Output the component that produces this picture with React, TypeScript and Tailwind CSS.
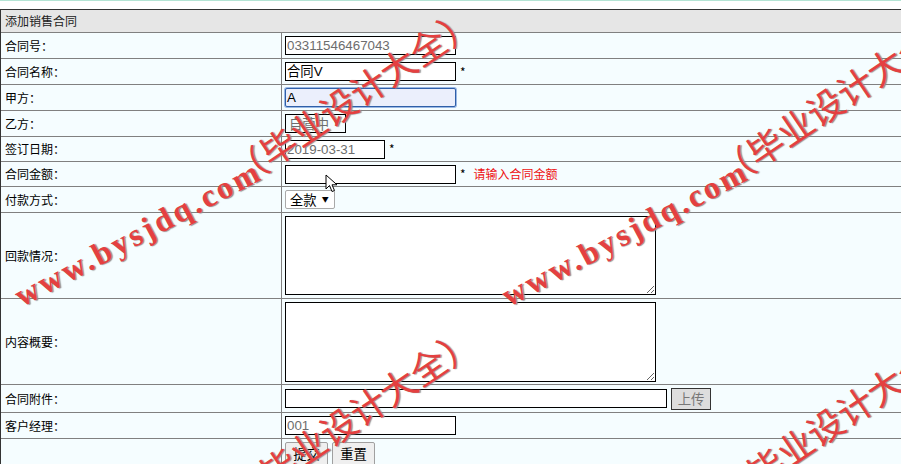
import React from "react";

const markBase =
  "absolute whitespace-nowrap -translate-x-1/2 -translate-y-1/2 leading-none text-[#e44040] [text-shadow:1px_1px_1px_#8a8a8a]";

function Latin({ cls }: { cls: string }) {
  return (
    <div className={markBase + " rotate-[-28deg] text-[32px] font-bold tracking-[3px] font-['Liberation_Serif',serif] " + cls}>
      www.bysjdq.com
    </div>
  );
}

function Cjk({ cls }: { cls: string }) {
  return (
    <div className={markBase + " rotate-[-34deg] text-[36px] font-['Noto_Sans_CJK_SC',sans-serif] " + cls}>
      （毕业设计大全）
    </div>
  );
}

function Row({ h, label, children }: { h: string; label: string; children?: React.ReactNode }) {
  return (
    <div className={"flex border-b border-[#808080] " + h}>
      <div className="w-[281px] shrink-0 border-r border-[#808080] flex items-center pl-[4px] text-[12px] text-black">
        {label}
      </div>
      <div className="flex items-center pl-[3px] gap-[4px]">{children}</div>
    </div>
  );
}

const inputBase =
  "h-[19px] border border-black bg-white px-[1px] text-[13.33px] leading-[17px] font-['Liberation_Sans','Noto_Sans_CJK_SC',sans-serif] outline-none";

export default function App() {
  return (
    <div className="relative w-[901px] h-[464px] overflow-hidden bg-white font-['Noto_Sans_CJK_SC','Liberation_Sans',sans-serif]">
      <div className="h-[9px] border-t border-[#b4e4d4]" />
      <div className="w-[910px] border-t border-l border-[#333333] bg-[#f5fdff]">
        <div className="h-[23px] border-b border-[#808080] bg-[#e6e6e6] flex items-center pl-[4px] text-[12px] text-[#222]">
          添加销售合同
        </div>
        <Row h="h-[26px]" label="合同号：">
          <div className={inputBase + " w-[171px] text-[#6d6d6d]"}>03311546467043</div>
        </Row>
        <Row h="h-[26px]" label="合同名称：">
          <div className={inputBase + " w-[171px] bg-[#ebeffc] text-black"}>合同V</div>
          <span className="text-[12px] text-black">*</span>
        </Row>
        <Row h="h-[26px]" label="甲方：">
          <div className="h-[19px] w-[171px] rounded-[2px] border border-[#2f5fa8] ring-1 ring-[#9ab8e4] bg-[#ebeffc] px-[1px] text-[13.33px] leading-[17px] text-black font-['Liberation_Sans',sans-serif]">
            A
          </div>
        </Row>
        <Row h="h-[26px]" label="乙方：">
          <div className="h-[19px] w-[61px] border border-black bg-[#f5fdff] pl-[3px] pr-[4px] flex items-center justify-between text-[13.33px] leading-[17px] text-[#6d6d6d]">
            <span>自营中</span>
            <span className="text-[7px] leading-none text-[#777]">▼</span>
          </div>
        </Row>
        <Row h="h-[25px]" label="签订日期：">
          <div className={inputBase + " w-[100px] h-[18px] leading-[16px] text-[#6d6d6d]"}>2019-03-31</div>
          <span className="text-[12px] text-black">*</span>
        </Row>
        <Row h="h-[25px]" label="合同金额：">
          <div className={inputBase + " w-[171px]"} />
          <span className="text-[12px] text-black">*</span>
          <span className="ml-[4px] text-[12px] text-[#ee1111]">请输入合同金额</span>
        </Row>
        <Row h="h-[26px]" label="付款方式：">
          <div className="h-[19px] w-[50px] rounded-[2px] border border-[#a9a9a9] bg-white flex items-center pl-[4px] gap-[5px] text-[13.33px] text-black">
            <span>全款</span>
            <span className="text-[7px] leading-none">▼</span>
          </div>
        </Row>
        <Row h="h-[86px]" label="回款情况：">
          <textarea className="block w-[371px] h-[79px] border border-black bg-white resize-y outline-none" />
        </Row>
        <Row h="h-[86px]" label="内容概要：">
          <textarea className="block w-[371px] h-[80px] border border-black bg-white resize-y outline-none" />
        </Row>
        <Row h="h-[28px]" label="合同附件：">
          <div className={inputBase + " w-[382px]"} />
          <div className="h-[22px] w-[40px] border border-[#333] bg-[#dddddd] flex items-center justify-center text-[13.33px] text-[#777]">
            上传
          </div>
        </Row>
        <Row h="h-[26px]" label="客户经理：">
          <div className={inputBase + " w-[171px] text-[#6d6d6d]"}>001</div>
        </Row>
        <div className="flex h-[40px]">
          <div className="w-[281px] shrink-0 border-r border-[#808080]" />
          <div className="flex items-start pt-[3px] pl-[3px] gap-[4px]">
            <div className="h-[24px] w-[43px] rounded-[2px] border border-[#a0a0a0] bg-[#efefef] flex items-center justify-center text-[13.33px] text-black">
              提交
            </div>
            <div className="h-[24px] w-[43px] rounded-[2px] border border-[#a0a0a0] bg-[#efefef] flex items-center justify-center text-[13.33px] text-black">
              重置
            </div>
          </div>
        </div>
      </div>

      <svg className="absolute left-[325px] top-[174px]" width="14" height="20" viewBox="0 0 14 20">
        <path d="M1 1 L1 15 L4.5 11.5 L7 17.5 L9.5 16.5 L7 10.8 L12 10.8 Z" fill="white" stroke="black" strokeWidth="1" strokeLinejoin="round" />
      </svg>

      <div className="pointer-events-none absolute inset-0 overflow-hidden">
        <Latin cls="left-[138px] top-[233px]" />
        <Latin cls="left-[625px] top-[233px]" />
        <Cjk cls="left-[352px] top-[95px]" />
        <Cjk cls="left-[839px] top-[95px]" />
        <Cjk cls="left-[352px] top-[415px]" />
        <Cjk cls="left-[839px] top-[415px]" />
      </div>
    </div>
  );
}
